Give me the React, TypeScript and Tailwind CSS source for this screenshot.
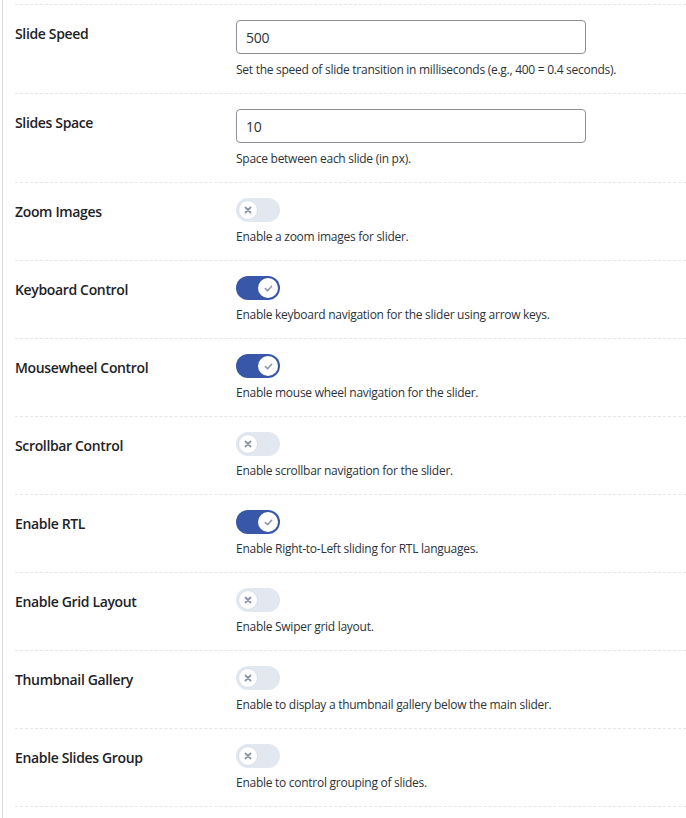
import React from 'react'

type Row =
  | { label: string; kind: 'input'; value: string; help: string }
  | { label: string; kind: 'toggle'; on: boolean; help: string }

const rows: Row[] = [
  {
    label: 'Slide Speed',
    kind: 'input',
    value: '500',
    help: 'Set the speed of slide transition in milliseconds (e.g., 400 = 0.4 seconds).',
  },
  { label: 'Slides Space', kind: 'input', value: '10', help: 'Space between each slide (in px).' },
  { label: 'Zoom Images', kind: 'toggle', on: false, help: 'Enable a zoom images for slider.' },
  {
    label: 'Keyboard Control',
    kind: 'toggle',
    on: true,
    help: 'Enable keyboard navigation for the slider using arrow keys.',
  },
  {
    label: 'Mousewheel Control',
    kind: 'toggle',
    on: true,
    help: 'Enable mouse wheel navigation for the slider.',
  },
  {
    label: 'Scrollbar Control',
    kind: 'toggle',
    on: false,
    help: 'Enable scrollbar navigation for the slider.',
  },
  { label: 'Enable RTL', kind: 'toggle', on: true, help: 'Enable Right-to-Left sliding for RTL languages.' },
  { label: 'Enable Grid Layout', kind: 'toggle', on: false, help: 'Enable Swiper grid layout.' },
  {
    label: 'Thumbnail Gallery',
    kind: 'toggle',
    on: false,
    help: 'Enable to display a thumbnail gallery below the main slider.',
  },
  { label: 'Enable Slides Group', kind: 'toggle', on: false, help: 'Enable to control grouping of slides.' },
]

function Toggle({ on }: { on: boolean }) {
  return (
    <div
      className={`flex h-[24px] w-[44px] items-center rounded-full px-[2px] ${
        on ? 'justify-end bg-[#3857a8]' : 'justify-start bg-[#e2e8f0]'
      }`}
    >
      <span
        className={`flex h-[20px] w-[20px] items-center justify-center rounded-full bg-white ${
          on ? '' : 'border border-[#d8dee8]'
        }`}
      >
        {on ? (
          <svg width="9" height="9" viewBox="0 0 10 10" fill="none">
            <path d="M1.5 5.2 L4 7.5 L8.5 2.5" stroke="#8a93a6" strokeWidth="1.7" strokeLinecap="round" strokeLinejoin="round" />
          </svg>
        ) : (
          <svg width="8" height="8" viewBox="0 0 8 8" fill="none">
            <path d="M1.5 1.5 L6.5 6.5 M6.5 1.5 L1.5 6.5" stroke="#8a93a6" strokeWidth="1.8" strokeLinecap="round" />
          </svg>
        )}
      </span>
    </div>
  )
}

export default function App() {
  return (
    <div
      className="flex h-[818px] w-[686px] overflow-hidden bg-white text-[#1d2327]"
      style={{ fontFamily: '"Open Sans", "Noto Sans", sans-serif' }}
    >
      <div className="ml-[2px] w-px bg-[#dcdcde]" />
      <div className="ml-[12px] flex-1 pt-[4px]">
        <div className="border-t border-dashed border-[#e6e6e6]">
          {rows.map((row) => (
            <div key={row.label} className="flex border-b border-dashed border-[#e6e6e6]">
              <div className="w-[221px] shrink-0 pt-[19px] text-[14px] leading-[20px] font-semibold tracking-[-0.35px]">
                {row.label}
              </div>
              <div className="pt-[15px] pb-[14px]">
                {row.kind === 'input' ? (
                  <div className="flex h-[34px] w-[350px] items-center rounded-[4px] border border-[#8c8f94] px-[9px] text-[14px] text-[#2c3338] tracking-[-0.3px]">
                    {row.value}
                  </div>
                ) : (
                  <Toggle on={row.on} />
                )}
                <p
                  className={`text-[12px] leading-[18px] text-[#2c3338] tracking-[-0.27px] ${
                    row.kind === 'input' ? 'mt-[7px]' : 'mt-[6px]'
                  }`}
                >
                  {row.help}
                </p>
              </div>
            </div>
          ))}
        </div>
      </div>
    </div>
  )
}
